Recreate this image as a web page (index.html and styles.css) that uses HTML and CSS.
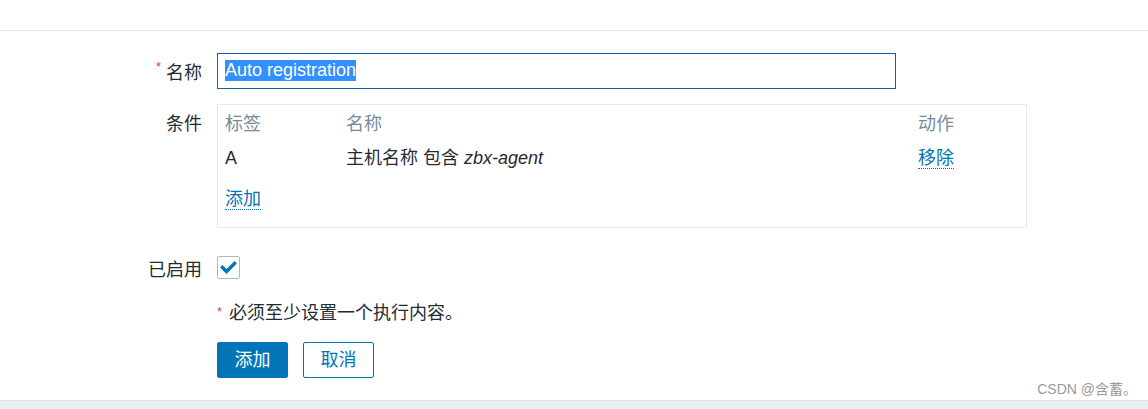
FILE: index.html
```html
<!DOCTYPE html>
<html lang="zh-CN">
<head>
<meta charset="utf-8">
<title>自动注册动作</title>
<link rel="stylesheet" href="styles.css">
</head>
<body>
<div class="page">
  <div class="topbar"></div>
  <form class="form">
    <div class="row row-name">
      <label class="label"><span class="req">*</span>名称</label>
      <div class="field">
        <div class="input"><span class="sel">Auto registration</span></div>
      </div>
    </div>
    <div class="row row-cond">
      <label class="label label-top">条件</label>
      <div class="field">
        <div class="cond-box">
          <div class="cond-grid">
            <div class="th">标签</div>
            <div class="th">名称</div>
            <div class="th">动作</div>
            <div class="td">A</div>
            <div class="td">主机名称 包含 <em>zbx-agent</em></div>
            <div class="td"><a class="link">移除</a></div>
          </div>
          <div class="add-row"><a class="link">添加</a></div>
        </div>
      </div>
    </div>
    <div class="row row-enabled">
      <label class="label">已启用</label>
      <div class="field">
        <span class="checkbox">
          <svg width="21" height="21" viewBox="0 0 21 21"><polyline points="4.5,10.5 8.5,14.5 16.5,6.5" fill="none" stroke="#0275b8" stroke-width="3.4" stroke-linecap="square"/></svg>
        </span>
      </div>
    </div>
    <div class="row row-note">
      <div class="label"></div>
      <div class="field note"><span class="req req-note">*</span>必须至少设置一个执行内容。</div>
    </div>
    <div class="row row-buttons">
      <div class="label"></div>
      <div class="field buttons">
        <button type="button" class="btn btn-primary">添加</button>
        <button type="button" class="btn btn-alt">取消</button>
      </div>
    </div>
  </form>
  <div class="watermark">CSDN @含蓄。</div>
  <div class="footer-band"></div>
</div>
</body>
</html>
```
FILE: styles.css
```css
html, body {
  margin: 0;
  padding: 0;
  background: #ffffff;
}
body {
  font-family: "Liberation Sans", "Noto Sans CJK SC", sans-serif;
  font-size: 18px;
  color: #1f2c33;
}
.page {
  position: relative;
  width: 1148px;
  height: 409px;
  overflow: hidden;
}
.topbar {
  height: 30px;
  border-bottom: 1px solid #ebebeb;
}
.form {
  padding-top: 22px;
}
.row {
  display: flex;
  align-items: flex-start;
  overflow: visible;
}
.label {
  width: 202px;
  flex: 0 0 202px;
  text-align: right;
  padding-right: 15px;
  box-sizing: content-box;
  white-space: nowrap;
  display: flex;
  justify-content: flex-end;
  align-items: center;
}
.field {
  flex: 1;
}
.req {
  color: #e33734;
  font-size: 13px;
  line-height: 13px;
  align-self: flex-start;
  margin-top: 7px;
  margin-right: 5px;
}
.row-name {
  height: 36px;
}
.row-name .label {
  height: 36px;
}
.input {
  width: 679px;
  height: 36px;
  box-sizing: border-box;
  border: 1px solid #15609c;
  padding: 6px 7px;
}
.sel {
  display: inline-block;
  background: #3390ff;
  color: #ffffff;
  line-height: 21px;
  height: 21px;
  vertical-align: top;
}
.row-cond {
  margin-top: 15px;
  height: 124px;
}
.row-cond .label {
  height: 36px;
}
.cond-box {
  width: 810px;
  height: 124px;
  box-sizing: border-box;
  border: 1px solid #e8eaec;
  padding: 7px 7px 0 7px;
}
.cond-grid {
  display: grid;
  grid-template-columns: 121px 572px auto;
  grid-auto-rows: 24px;
  row-gap: 10px;
  line-height: 24px;
}
.th {
  color: #768d99;
}
.td em {
  font-style: italic;
}
.link {
  color: #0275b8;
  text-decoration: none;
  border-bottom: 1px dotted #0275b8;
  line-height: 20px;
  display: inline-block;
}
.add-row {
  margin-top: 17px;
  height: 24px;
  line-height: 24px;
}
.row-enabled {
  margin-top: 28px;
  height: 23px;
}
.row-enabled .label {
  height: 23px;
}
.checkbox {
  display: block;
  width: 23px;
  height: 23px;
  box-sizing: border-box;
  border: 1px solid #acbbc2;
  border-radius: 2px;
  background: #ffffff;
}
.checkbox svg {
  display: block;
}
.row-note {
  margin-top: 22px;
  height: 24px;
}
.row-note .label {
  height: 24px;
}
.note {
  height: 24px;
  line-height: 24px;
  display: flex;
  align-items: center;
}
.req-note {
  align-self: flex-start;
  margin-top: 4px;
  margin-right: 7px;
}
.row-buttons {
  margin-top: 17px;
  height: 36px;
}
.buttons {
  display: flex;
  gap: 15px;
}
.btn {
  width: 71px;
  height: 36px;
  box-sizing: border-box;
  border-radius: 2px;
  font-family: "Liberation Sans", "Noto Sans CJK SC", sans-serif;
  font-size: 18px;
  padding: 0;
  line-height: 34px;
  cursor: pointer;
}
.btn-primary {
  background: #0275b8;
  border: 1px solid #0275b8;
  color: #ffffff;
}
.btn-alt {
  background: #ffffff;
  border: 1px solid #0275b8;
  color: #0275b8;
}
.watermark {
  position: absolute;
  right: 11px;
  top: 379px;
  font-size: 14px;
  line-height: 20px;
  color: #9a9a9a;
}
.footer-band {
  position: absolute;
  left: 0;
  right: 0;
  bottom: 0;
  height: 8px;
  background: #ebeef2;
  border-top: 1px solid #dfe3e7;
}
```
